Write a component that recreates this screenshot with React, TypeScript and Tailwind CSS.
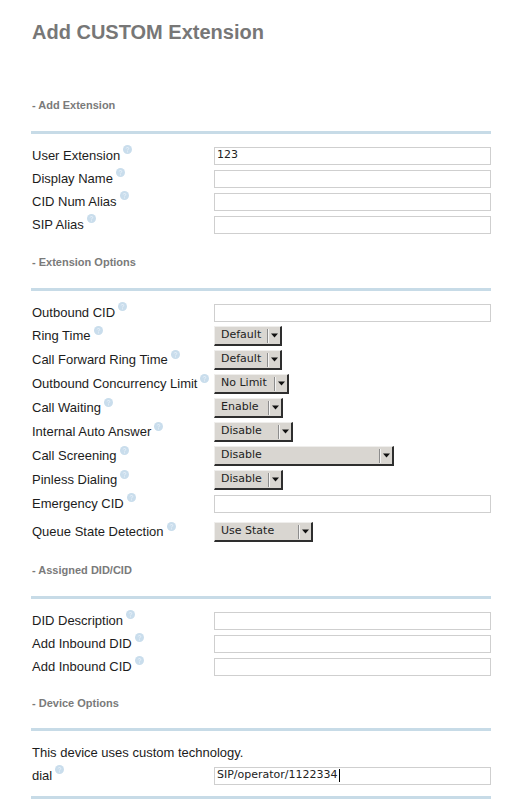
import React from 'react';

const sans = { fontFamily: '"Liberation Sans", Arial, sans-serif' };
const deja = { fontFamily: '"DejaVu Sans", Verdana, sans-serif' };

function Help() {
  return (
    <svg width="9" height="9" viewBox="0 0 10 10" className="ml-[3px] -translate-y-[6px] shrink-0">
      <circle cx="5" cy="5" r="5" fill="#c9ddec" />
      <path d="M3.6 3.8 C3.6 2.4 6.4 2.4 6.4 3.8 C6.4 4.8 5 4.8 5 6" stroke="#eaf2f9" strokeWidth="1" fill="none" />
      <circle cx="5" cy="7.6" r="0.6" fill="#eaf2f9" />
    </svg>
  );
}

function Label({ text, help = true }: { text: string; help?: boolean }) {
  return (
    <div className="w-[183px] shrink-0 pl-px flex items-center text-[13px] text-[#1c1c1c]" style={sans}>
      <span>{text}</span>
      {help && <Help />}
    </div>
  );
}

function TextBox({ value = '', caret = false }: { value?: string; caret?: boolean }) {
  return (
    <div
      className="w-[277px] h-[18px] border border-[#cfcfcf] bg-white flex items-center pl-[2px] text-[11px] text-[#222]"
      style={deja}
    >
      <span>{value}</span>
      {caret && <span className="w-px h-[13px] bg-black ml-px" />}
    </div>
  );
}

function Dropdown({ value, width }: { value: string; width: string }) {
  return (
    <div
      className={`${width} h-[20px] flex items-center bg-[#d9d6d1] border-t border-l border-t-[#efeeec] border-l-[#efeeec] border-b-2 border-r-2 border-b-[#2e2e2e] border-r-[#2e2e2e]`}
    >
      <span className="flex-1 pl-[6px] text-[11px] text-[#222] whitespace-nowrap" style={deja}>
        {value}
      </span>
      <span className="w-px h-[14px] bg-[#8c8c8c]" />
      <span className="w-px h-[14px] bg-[#f4f4f4]" />
      <span className="w-[11px] flex justify-center">
        <svg width="7" height="5" viewBox="0 0 7 5">
          <path d="M0 0.5 H7 L3.5 4.5 Z" fill="#111" />
        </svg>
      </span>
    </div>
  );
}

function InputRow({ label, value, caret }: { label: string; value?: string; caret?: boolean }) {
  return (
    <div className="flex items-center h-[23px]">
      <Label text={label} />
      <TextBox value={value} caret={caret} />
    </div>
  );
}

function SelectRow({ label, value, width }: { label: string; value: string; width: string }) {
  return (
    <div className="flex items-center h-[24px]">
      <Label text={label} />
      <Dropdown value={value} width={width} />
    </div>
  );
}

function Section({ title, first = false, tight = false }: { title: string; first?: boolean; tight?: boolean }) {
  return (
    <>
      <div
        className={`${first ? 'mt-[54px]' : tight ? 'mt-[18px]' : 'mt-[19px]'} pl-px h-[14px] leading-[14px] text-[11px] font-bold text-[#7a7a7a]`}
        style={sans}
      >
        - {title}
      </div>
      <div className={`${tight ? 'mt-[18px]' : 'mt-[19px]'} h-[3px] bg-[#c7dbe7]`} />
      <div className="h-[10px]" />
    </>
  );
}

export default function App() {
  return (
    <div className="min-h-screen bg-white">
      <div className="w-[460px] ml-[31px] pt-[20px] pb-[8px]">
        <h1 className="pl-px h-[24px] leading-[24px] text-[20px] font-bold text-[#777777]" style={sans}>
          Add CUSTOM Extension
        </h1>

        <Section title="Add Extension" first />
        <InputRow label="User Extension" value="123" />
        <InputRow label="Display Name" />
        <InputRow label="CID Num Alias" />
        <InputRow label="SIP Alias" />

        <Section title="Extension Options" />
        <InputRow label="Outbound CID" />
        <SelectRow label="Ring Time" value="Default" width="w-[68px]" />
        <SelectRow label="Call Forward Ring Time" value="Default" width="w-[68px]" />
        <SelectRow label="Outbound Concurrency Limit" value="No Limit" width="w-[75px]" />
        <SelectRow label="Call Waiting" value="Enable" width="w-[69px]" />
        <SelectRow label="Internal Auto Answer" value="Disable" width="w-[79px]" />
        <SelectRow label="Call Screening" value="Disable" width="w-[180px]" />
        <SelectRow label="Pinless Dialing" value="Disable" width="w-[69px]" />
        <InputRow label="Emergency CID" />
        <div className="mt-[5px]">
          <SelectRow label="Queue State Detection" value="Use State" width="w-[99px]" />
        </div>

        <Section title="Assigned DID/CID" />
        <InputRow label="DID Description" />
        <InputRow label="Add Inbound DID" />
        <InputRow label="Add Inbound CID" />

        <Section title="Device Options" tight />
        <div className="h-[23px] flex items-center pl-px text-[13px] text-[#1c1c1c]" style={sans}>
          This device uses custom technology.
        </div>
        <InputRow label="dial" value="SIP/operator/1122334" caret />
        <div className="mt-[9px] h-[3px] bg-[#c7dbe7]" />
      </div>
    </div>
  );
}
